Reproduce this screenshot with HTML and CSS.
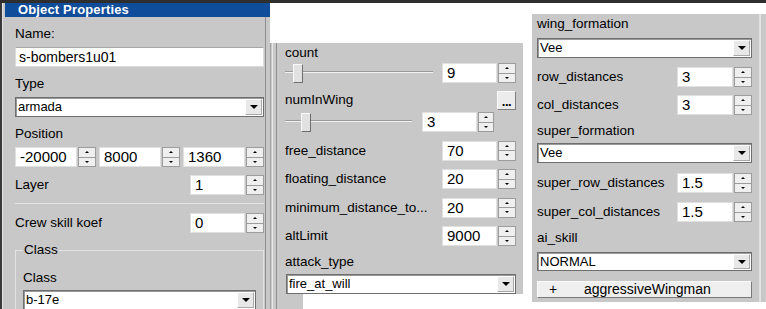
FILE: index.html
```html
<!DOCTYPE html>
<html lang="en">
<head>
    <meta charset="UTF-8">
    <title>Object Properties</title>
    <link rel="stylesheet" href="styles.css">
</head>
<body>
<div class="screen">

    <!-- left: object header -->
    <section class="pane-left">
        <div class="titlebar">Object Properties</div>
        <div class="props">
            <div class="lbl first">Name:</div>
            <div class="textbox">s-bombers1u01</div>

            <div class="lbl">Type</div>
            <div class="combo"><span class="combo-text">armada</span><span class="combo-btn"></span></div>

            <div class="lbl">Position</div>
            <div class="pos-row">
                <div class="spin"><div class="spin-val">-20000</div><div class="spin-btns"><span class="up"></span><span class="down"></span></div></div>
                <div class="spin"><div class="spin-val">8000</div><div class="spin-btns"><span class="up"></span><span class="down"></span></div></div>
                <div class="spin"><div class="spin-val">1360</div><div class="spin-btns"><span class="up"></span><span class="down"></span></div></div>
            </div>

            <div class="row row-layer">
                <span>Layer</span>
                <div class="spin"><div class="spin-val">1</div><div class="spin-btns"><span class="up"></span><span class="down"></span></div></div>
            </div>

            <div class="sep"></div>

            <div class="row row-crew">
                <span>Crew skill koef</span>
                <div class="spin"><div class="spin-val">0</div><div class="spin-btns"><span class="up"></span><span class="down"></span></div></div>
            </div>

            <fieldset class="group">
                <legend>Class</legend>
                <div class="lbl group-lbl">Class</div>
                <div class="combo"><span class="combo-text">b-17e</span><span class="combo-btn"></span></div>
            </fieldset>
        </div>
    </section>

    <!-- middle: wing -->
    <section class="col-mid">
        <div class="pane-mid">
            <div class="lbl first">count</div>
            <div class="row slider-row">
                <div class="slider s-count"><span class="thumb" style="margin-left: 8px"></span></div>
                <div class="spin"><div class="spin-val">9</div><div class="spin-btns"><span class="up"></span><span class="down"></span></div></div>
            </div>

            <div class="row row-wing">
                <span>numInWing</span>
                <span class="dots">...</span>
            </div>
            <div class="row slider-row slider-row2">
                <div class="slider s-wing"><span class="thumb" style="margin-left: 16px"></span></div>
                <div class="spin spin-narrow"><div class="spin-val">3</div><div class="spin-btns"><span class="up"></span><span class="down"></span></div></div>
            </div>

            <div class="row mid-row">
                <span>free_distance</span>
                <div class="spin"><div class="spin-val">70</div><div class="spin-btns"><span class="up"></span><span class="down"></span></div></div>
            </div>
            <div class="row mid-row">
                <span>floating_distance</span>
                <div class="spin"><div class="spin-val">20</div><div class="spin-btns"><span class="up"></span><span class="down"></span></div></div>
            </div>
            <div class="row mid-row">
                <span>minimum_distance_to...</span>
                <div class="spin"><div class="spin-val">20</div><div class="spin-btns"><span class="up"></span><span class="down"></span></div></div>
            </div>
            <div class="row mid-row">
                <span>altLimit</span>
                <div class="spin"><div class="spin-val">9000</div><div class="spin-btns"><span class="up"></span><span class="down"></span></div></div>
            </div>

            <div class="lbl mid-lbl">attack_type</div>
            <div class="combo"><span class="combo-text">fire_at_will</span><span class="combo-btn"></span></div>
        </div>
    </section>

    <!-- right: formation -->
    <section class="pane-right">
        <div class="lbl first">wing_formation</div>
        <div class="combo c6"><span class="combo-text">Vee</span><span class="combo-btn"></span></div>

        <div class="row r9">
            <span>row_distances</span>
            <div class="spin"><div class="spin-val">3</div><div class="spin-btns"><span class="up"></span><span class="down"></span></div></div>
        </div>
        <div class="row r8">
            <span>col_distances</span>
            <div class="spin"><div class="spin-val">3</div><div class="spin-btns"><span class="up"></span><span class="down"></span></div></div>
        </div>

        <div class="lbl r8">super_formation</div>
        <div class="combo c4"><span class="combo-text">Vee</span><span class="combo-btn"></span></div>

        <div class="row r10">
            <span>super_row_distances</span>
            <div class="spin"><div class="spin-val">1.5</div><div class="spin-btns"><span class="up"></span><span class="down"></span></div></div>
        </div>
        <div class="row r9">
            <span>super_col_distances</span>
            <div class="spin"><div class="spin-val">1.5</div><div class="spin-btns"><span class="up"></span><span class="down"></span></div></div>
        </div>

        <div class="lbl r8">ai_skill</div>
        <div class="combo c6 combo-short"><span class="combo-text">NORMAL</span><span class="combo-btn"></span></div>

        <div class="add-btn"><span class="plus">+</span><span>aggressiveWingman</span></div>
    </section>

</div>
</body>
</html>
```

FILE: styles.css
```css
* {
    margin: 0;
    padding: 0;
    box-sizing: border-box;
}
body {
    background: #fff;
    font-family: "Liberation Sans", Arial, sans-serif;
    font-size: 13.5px;
    color: #000;
}
.screen {
    width: 766px;
    height: 309px;
    border-top: 3px solid #2e2e2e;
    display: flex;
    align-items: flex-start;
    overflow: hidden;
}

/* ---------- left pane ---------- */
.pane-left {
    width: 270px;
    height: 306px;
    background: #c8c8c8;
    border-left: 2px solid #383838;
    box-shadow: inset 1px 0 #e2e2e2, inset -4px 0 #c8c8c8, inset -5px 0 #8e8e8e;
}
.titlebar {
    margin-left: 3px;
    height: 14px;
    background: #0f4c9a;
    color: #fff;
    font-size: 13px;
    font-weight: bold;
    line-height: 14px;
    letter-spacing: 0.15px;
    padding-left: 13px;
}
.props {
    padding: 0 6px 0 13px;
}

.lbl {
    line-height: 16px;
    margin-top: 9px;
}
.lbl + .textbox,
.lbl + .combo,
.lbl + .pos-row {
    margin-top: 5px;
}

.textbox {
    height: 20px;
    background: #fff;
    border: 1px solid #dadada;
    border-top-color: #a8a8a8;
    font-size: 14px;
    line-height: 18px;
    padding-left: 3px;
}

.combo {
    display: flex;
    height: 20px;
    background: #fff;
    border: 1px solid #6e6e6e;
    box-shadow: inset 1px 1px #9a9a9a;
}
.combo-text {
    flex: 1;
    font-size: 13px;
    line-height: 18px;
    padding-left: 2px;
    overflow: hidden;
    white-space: nowrap;
}
.combo-btn {
    width: 17px;
    margin: 1px 1px 1px 0;
    background: #e8e8e8;
    border: 1px solid #a9a9a9;
    border-top-color: #fff;
    border-left-color: #fff;
    display: flex;
    align-items: center;
    justify-content: center;
}
.combo-btn::after {
    content: "";
    border-left: 4px solid transparent;
    border-right: 4px solid transparent;
    border-top: 4px solid #000;
}
.combo-short {
    height: 19px;
}
.combo-short .combo-text {
    line-height: 17px;
}

.pos-row {
    display: grid;
    grid-template-columns: repeat(3, 1fr);
    gap: 3px;
    height: 20px;
}
.pos-row .spin {
    width: auto;
}

.row {
    display: flex;
    align-items: center;
    justify-content: space-between;
    height: 20px;
    margin-top: 8px;
    line-height: 16px;
}
.sep {
    margin-top: 8px;
    height: 1px;
    background: #e4e4e4;
}
.row-crew {
    margin-top: 9px;
}

.group {
    margin-top: 9px;
    border: 1px solid #e2e2e2;
    padding: 0 7px;
    height: 80px;
}
.group legend {
    padding: 0 1px;
    line-height: 16px;
}
.group-lbl {
    margin-top: 12px;
}
.group .combo {
    margin-top: 4px;
}

/* ---------- spin box ---------- */
.spin {
    display: flex;
    width: 74px;
    height: 20px;
}
.spin-val {
    flex: 1;
    background: #fff;
    border: 1px solid #e0e0e0;
    font-size: 15px;
    line-height: 18px;
    padding-left: 4px;
    white-space: nowrap;
    overflow: hidden;
}
.spin-btns {
    width: 18px;
    margin-left: 1px;
    display: flex;
    flex-direction: column;
    background: #efefef;
    border: 1px solid #9c9c9c;
}
.spin-btns span {
    flex: 1;
    display: flex;
    align-items: center;
    justify-content: center;
}
.spin-btns .down {
    border-top: 1px solid #9c9c9c;
}
.spin-btns .up::after,
.spin-btns .down::after {
    content: "";
    border-left: 2px solid transparent;
    border-right: 2px solid transparent;
}
.spin-btns .up::after {
    border-bottom: 2px solid #000;
}
.spin-btns .down::after {
    border-top: 2px solid #000;
}

/* ---------- middle pane ---------- */
.col-mid {
    width: 253px;
    height: 266px;
    margin-top: 40px;
    display: flex;
    flex-direction: column;
    background: linear-gradient(to right, #a2a2a2 0 1px, #c8c8c8 1px 2px, #e6e6e6 2px 3px, #c8c8c8 3px 6px, #8e8e8e 6px 7px, #c8c8c8 7px 33px, #fff 33px);
}
.pane-mid {
    margin-left: 7px;
    background: #c8c8c8;
    padding: 0 7px 0 8px;
}
.pane-mid .first,
.pane-right .first {
    margin-top: 2px;
}
.pane-mid .lbl + .row {
    margin-top: 2px;
}
.slider-row {
    justify-content: space-between;
}
.slider {
    height: 20px;
    display: flex;
    align-items: center;
    background: linear-gradient(to bottom, transparent 8px, #9a9a9a 8px 9px, #f2f2f2 9px 10px, transparent 10px);
}
.s-count {
    width: 148px;
}
.s-wing {
    width: 127px;
}
.thumb {
    width: 10px;
    height: 19px;
    background: #e2e2e2;
    border: 1px solid #6e6e6e;
    border-top-color: #fafafa;
    border-left-color: #fafafa;
}
.row-wing {
    margin-top: 7px;
}
.dots {
    width: 19px;
    height: 19px;
    background: #ececec;
    border: 1px solid #7e7e7e;
    border-top-color: #fafafa;
    border-left-color: #fafafa;
    font-size: 13px;
    font-weight: bold;
    line-height: 20px;
    text-align: center;
    letter-spacing: -0.5px;
}
.slider-row2 {
    margin-top: 2px;
    justify-content: flex-start;
    gap: 10px;
}
.spin-narrow {
    width: 72px;
}
.spin-narrow .spin-btns {
    width: 16px;
}
.mid-row {
    margin-top: 8.5px;
}
.mid-lbl {
    margin-top: 8px;
}
.pane-mid .combo {
    margin-top: 4px;
    margin-left: 1px;
}

/* ---------- right pane ---------- */
.pane-right {
    width: 234px;
    margin-left: 9px;
    margin-top: 11px;
    padding: 0 14px 4px 5px;
    background: #c8c8c8;
    box-shadow: inset -5px 0 #c8c8c8, inset -6px 0 #e4e4e4, inset -7px 0 #dedede;
}
.pane-right .spin {
    width: 75px;
}
.c6 {
    margin-top: 6px !important;
}
.c4 {
    margin-top: 4px !important;
}
.r8 {
    margin-top: 8px;
}
.r9 {
    margin-top: 9px;
}
.r10 {
    margin-top: 10px;
}
.add-btn {
    margin-top: 10px;
    height: 17px;
    display: flex;
    align-items: center;
    background: #efefef;
    border: 1px solid #7a7a7a;
    border-top-color: #fafafa;
    border-left-color: #fafafa;
    font-size: 14px;
    line-height: 15px;
}
.add-btn .plus {
    margin-left: 11px;
    width: 35px;
}
```
